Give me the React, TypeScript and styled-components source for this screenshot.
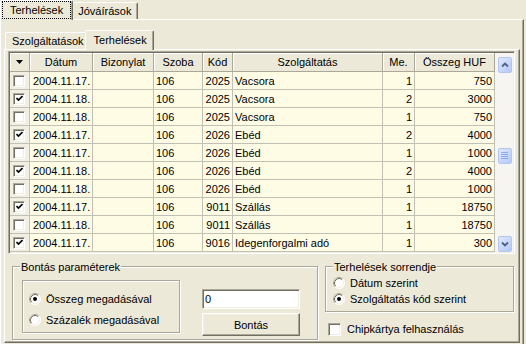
import React from "react";
import styled, { createGlobalStyle, css } from "styled-components";

const BG = "#ECE9D8";
const SHADOW = "#ACA899";
const DARK = "#716F64";
const LIGHT = "#F1EFE2";
const CREAM = "#FFFCE6";
const TINT = "#F1EFE4";
const GRIDLINE = "#C2C0B4";
const COLS = "20px 63px 61px 49px 30px 150px 32px 80px";

const GlobalStyle = createGlobalStyle`
  html, body { margin: 0; padding: 0; background: ${BG}; }
  body { font-family: "Liberation Sans", Arial, sans-serif; font-size: 11px; color: #000; }
  * { box-sizing: border-box; }
`;

const Window = styled.div`
  width: 526px;
  height: 344px;
  overflow: hidden;
  background: ${BG};
`;

const TabStrip = styled.div<{ $inner?: boolean }>`
  position: relative;
  z-index: 1;
  display: flex;
  align-items: flex-end;
  height: 19px;
  padding-left: ${(p) => (p.$inner ? 1 : 2)}px;
`;

const Tab = styled.div<{ $active?: boolean; $inner?: boolean }>`
  position: relative;
  display: flex;
  align-items: center;
  white-space: nowrap;
  background: ${BG};
  border-top: 1px solid #fff;
  border-left: 1px solid #fff;
  border-right: 1px solid ${DARK};
  box-shadow: inset -1px 0 0 ${SHADOW};
  border-radius: 2px 2px 0 0;
  ${(p) =>
    p.$active
      ? css`
          z-index: 2;
          height: 20px;
          margin: 0 -2px -1px;
          padding: ${p.$inner ? "0 6px 2px 8px" : "0 1px 0 1px"};
          align-items: ${p.$inner ? "center" : "flex-start"};
        `
      : css`
          height: 17px;
          padding: ${p.$inner ? "0 2px 1px 6px" : "0 6px 1px 6px"};
        `}
`;

const FocusLabel = styled.span`
  display: flex;
  align-items: center;
  height: 18px;
  padding: 0 7px 1px;
  border: 1px dotted #000;
`;

const TabPanel = styled.div<{ $inner?: boolean }>`
  background: ${BG};
  border-top: 1px solid #fff;
  border-left: 1px solid #fff;
  border-right: 1px solid ${DARK};
  border-bottom: 1px solid ${DARK};
  box-shadow: inset -1px -1px 0 ${SHADOW};
  ${(p) =>
    p.$inner
      ? css`
          width: 516px;
          height: 294px;
          padding: 1px 3px 0 3px;
        `
      : css`
          width: 524px;
          height: 340px;
          padding: 10px 0 0 3px;
        `}
`;

const GridFrame = styled.div`
  display: flex;
  width: 507px;
  height: 203px;
  padding: 1px;
  border: 1px solid;
  border-color: ${SHADOW} #fff #fff ${SHADOW};
  box-shadow: inset 1px 1px 0 ${DARK}, inset -1px -1px 0 ${LIGHT};
`;

const GridBody = styled.div`
  display: flex;
  flex-direction: column;
  width: 485px;
  background: ${CREAM};
`;

const Row = styled.div<{ $head?: boolean }>`
  display: grid;
  grid-template-columns: ${COLS};
  height: ${(p) => (p.$head ? 19 : 18)}px;
`;

const HeadCell = styled.div`
  display: flex;
  align-items: center;
  justify-content: center;
  background: ${BG};
  border-right: 1px solid ${SHADOW};
  border-bottom: 1px solid ${SHADOW};
  box-shadow: inset 1px 1px 0 #fff;
  white-space: nowrap;
  overflow: hidden;
  padding-bottom: 1px;
`;

const Cell = styled.div<{ $right?: boolean; $tint?: boolean; $pad?: number }>`
  display: flex;
  align-items: center;
  justify-content: ${(p) => (p.$right ? "flex-end" : "flex-start")};
  padding: 0 ${(p) => (p.$right ? 2 : 0)}px 0 ${(p) => (p.$pad ?? 2)}px;
  background: ${(p) => (p.$tint ? TINT : CREAM)};
  border-right: 1px solid ${GRIDLINE};
  border-bottom: 1px solid ${GRIDLINE};
  white-space: nowrap;
  overflow: hidden;
`;

const Box = styled.span<{ $size: number }>`
  display: inline-flex;
  align-items: center;
  justify-content: center;
  flex: none;
  width: ${(p) => p.$size}px;
  height: ${(p) => p.$size}px;
  background: #fff;
  border: 1px solid;
  border-color: ${SHADOW} #fff #fff ${SHADOW};
  box-shadow: inset 1px 1px 0 ${DARK}, inset -1px -1px 0 ${LIGHT};
`;

const ScrollBar = styled.div`
  width: 18px;
  display: flex;
  flex-direction: column;
  align-items: center;
  padding: 4px 0 0 1px;
  background: #F6F5F1;
`;

const blueButton = css`
  width: 14px;
  height: 16px;
  flex: none;
  border: 1px solid #B3C6F2;
  border-radius: 2px;
  background: linear-gradient(135deg, #E2EAFE 0%, #C9D8FB 50%, #B5C9F7 100%);
  display: flex;
  align-items: center;
  justify-content: center;
`;

const ScrollButton = styled.div`
  ${blueButton}
`;

const ScrollTrack = styled.div`
  flex: 1;
  display: flex;
  flex-direction: column;
  align-items: center;
`;

const ScrollThumb = styled.div<{ $offset: number }>`
  ${blueButton}
  margin-top: ${(p) => p.$offset}px;
`;

const BottomArea = styled.div`
  display: flex;
  align-items: flex-start;
  gap: 7px;
  margin-top: 12px;
  padding-left: 4px;
`;

const etched = css`
  border: 1px solid ${SHADOW};
  box-shadow: inset 1px 1px 0 #fff, 1px 1px 0 #fff;
`;

const GroupBox = styled.div<{ $w: number; $h: number }>`
  position: relative;
  width: ${(p) => p.$w}px;
  height: ${(p) => p.$h}px;
  ${etched}
`;

const GroupCaption = styled.span`
  position: absolute;
  top: -6px;
  left: 7px;
  padding: 0 1px;
  line-height: 13px;
  background: ${BG};
  white-space: nowrap;
`;

const SplitGroup = styled(GroupBox)`
  display: flex;
  align-items: flex-start;
  padding: 13px 0 0 9px;
`;

const EtchedBox = styled.div`
  width: 158px;
  height: 53px;
  display: flex;
  flex-direction: column;
  gap: 5px;
  padding: 10px 0 0 6px;
  ${etched}
`;

const OptionRow = styled.label`
  display: flex;
  align-items: center;
  gap: 5px;
  height: 16px;
  white-space: nowrap;
`;

const ActionColumn = styled.div`
  display: flex;
  flex-direction: column;
  gap: 4px;
  width: 98px;
  margin-left: 22px;
  padding-top: 9px;
`;

const TextInput = styled.input`
  width: 98px;
  height: 20px;
  margin: 0;
  padding: 0 2px 0 2px;
  font: inherit;
  color: #000;
  background: #fff;
  outline: none;
  border: 1px solid;
  border-color: ${SHADOW} #fff #fff ${SHADOW};
  box-shadow: inset 1px 1px 0 ${DARK}, inset -1px -1px 0 ${LIGHT};
`;

const Button = styled.button`
  width: 98px;
  height: 23px;
  margin: 0;
  padding: 0;
  font: inherit;
  color: #000;
  background: ${BG};
  border: 1px solid;
  border-color: #fff ${DARK} ${DARK} #fff;
  box-shadow: inset -1px -1px 0 ${SHADOW}, inset 1px 1px 0 ${LIGHT};
`;

const RightColumn = styled.div`
  display: flex;
  flex-direction: column;
  width: 189px;
`;

const SortGroup = styled(GroupBox)`
  display: flex;
  flex-direction: column;
  padding: 8px 0 0 7px;
`;

const CheckRow = styled.label`
  display: flex;
  align-items: center;
  gap: 6px;
  height: 16px;
  margin-top: 9px;
  padding-left: 3px;
  white-space: nowrap;
`;

const Radio = ({ checked }: { checked?: boolean }) => (
  <svg width="12" height="12" viewBox="0 0 12 12" style={{ flex: "none" }}>
    <circle cx="6" cy="6" r="5.5" fill="#fff" />
    <path d="M2.11 9.89 A5.5 5.5 0 0 1 9.89 2.11" fill="none" stroke={SHADOW} />
    <path d="M2.82 9.18 A4.5 4.5 0 0 1 9.18 2.82" fill="none" stroke={DARK} />
    <path d="M9.89 2.11 A5.5 5.5 0 0 1 2.11 9.89" fill="none" stroke="#fff" />
    <path d="M9.18 2.82 A4.5 4.5 0 0 1 2.82 9.18" fill="none" stroke={LIGHT} />
    {checked && <circle cx="6" cy="6" r="2" fill="#000" />}
  </svg>
);

const Check = () => (
  <svg width="7" height="7" viewBox="0 0 7 7">
    <path d="M0.5 3 L2.5 5 L6.5 1" fill="none" stroke="#000" strokeWidth="1.7" />
  </svg>
);

const Chevron = ({ up }: { up?: boolean }) => (
  <svg width="8" height="6" viewBox="0 0 8 6">
    <path
      d={up ? "M1 4.5 L4 1.5 L7 4.5" : "M1 1.5 L4 4.5 L7 1.5"}
      fill="none"
      stroke="#4D6185"
      strokeWidth="1.8"
    />
  </svg>
);

const Grip = () => (
  <svg width="7" height="8" viewBox="0 0 7 8">
    {[0.5, 2.5, 4.5, 6.5].map((y) => (
      <line key={y} x1="0" x2="7" y1={y} y2={y} stroke="#8FADEA" />
    ))}
  </svg>
);

const HeadArrow = () => (
  <svg width="7" height="4" viewBox="0 0 7 4">
    <path d="M0 0 H7 L3.5 4 Z" fill="#000" />
  </svg>
);

type Item = [boolean, string, string, string, string, string, string, string];

const rows: Item[] = [
  [false, "2004.11.17.", "", "106", "2025", "Vacsora", "1", "750"],
  [true, "2004.11.18.", "", "106", "2025", "Vacsora", "2", "3000"],
  [false, "2004.11.18.", "", "106", "2025", "Vacsora", "1", "750"],
  [true, "2004.11.17.", "", "106", "2026", "Ebéd", "2", "4000"],
  [false, "2004.11.17.", "", "106", "2026", "Ebéd", "1", "1000"],
  [true, "2004.11.18.", "", "106", "2026", "Ebéd", "2", "4000"],
  [false, "2004.11.18.", "", "106", "2026", "Ebéd", "1", "1000"],
  [true, "2004.11.17.", "", "106", "9011", "Szállás", "1", "18750"],
  [false, "2004.11.18.", "", "106", "9011", "Szállás", "1", "18750"],
  [true, "2004.11.17.", "", "106", "9016", "Idegenforgalmi adó", "1", "300"],
];

const headers = ["Dátum", "Bizonylat", "Szoba", "Kód", "Szolgáltatás", "Me.", "Összeg HUF"];

export default function App() {
  return (
    <Window>
      <GlobalStyle />
      <TabStrip>
        <Tab $active>
          <FocusLabel>Terhelések</FocusLabel>
        </Tab>
        <Tab>Jóváírások</Tab>
      </TabStrip>
      <TabPanel>
        <TabStrip $inner>
          <Tab $inner>Szolgáltatások</Tab>
          <Tab $inner $active>
            Terhelések
          </Tab>
        </TabStrip>
        <TabPanel $inner>
          <GridFrame>
            <GridBody>
              <Row $head>
                <HeadCell>
                  <HeadArrow />
                </HeadCell>
                {headers.map((h) => (
                  <HeadCell key={h}>{h}</HeadCell>
                ))}
              </Row>
              {rows.map((r, i) => (
                <Row key={i}>
                  <Cell $tint $pad={3}>
                    <Box $size={12}>{r[0] && <Check />}</Box>
                  </Cell>
                  <Cell $pad={3}>{r[1]}</Cell>
                  <Cell>{r[2]}</Cell>
                  <Cell>{r[3]}</Cell>
                  <Cell $right>{r[4]}</Cell>
                  <Cell>{r[5]}</Cell>
                  <Cell $right>{r[6]}</Cell>
                  <Cell $right>{r[7]}</Cell>
                </Row>
              ))}
            </GridBody>
            <ScrollBar>
              <ScrollButton>
                <Chevron up />
              </ScrollButton>
              <ScrollTrack>
                <ScrollThumb $offset={75}>
                  <Grip />
                </ScrollThumb>
              </ScrollTrack>
              <ScrollButton>
                <Chevron />
              </ScrollButton>
            </ScrollBar>
          </GridFrame>
          <BottomArea>
            <SplitGroup $w={306} $h={74}>
              <GroupCaption>Bontás paraméterek</GroupCaption>
              <EtchedBox>
                <OptionRow>
                  <Radio checked />
                  Összeg megadásával
                </OptionRow>
                <OptionRow>
                  <Radio />
                  Százalék megadásával
                </OptionRow>
              </EtchedBox>
              <ActionColumn>
                <TextInput readOnly value="0" />
                <Button>Bontás</Button>
              </ActionColumn>
            </SplitGroup>
            <RightColumn>
              <SortGroup $w={189} $h={46}>
                <GroupCaption>Terhelések sorrendje</GroupCaption>
                <OptionRow>
                  <Radio />
                  Dátum szerint
                </OptionRow>
                <OptionRow>
                  <Radio checked />
                  Szolgáltatás kód szerint
                </OptionRow>
              </SortGroup>
              <CheckRow>
                <Box $size={13} />
                Chipkártya felhasználás
              </CheckRow>
            </RightColumn>
          </BottomArea>
        </TabPanel>
      </TabPanel>
    </Window>
  );
}
